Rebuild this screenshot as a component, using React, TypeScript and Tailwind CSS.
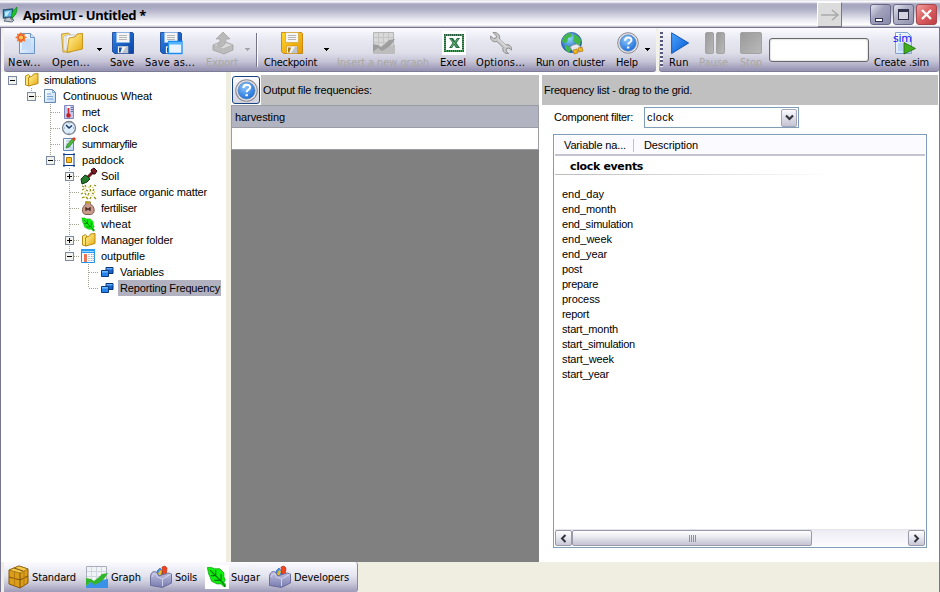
import { useLayoutEffect, useRef, useState } from "react";
import type { ReactNode } from "react";

/* Text set to an exact advance width through its letter spacing. */
function Label({ text, width, className = "" }: { text: string; width: number; className?: string }) {
  const ref = useRef<HTMLSpanElement>(null);
  const [spacing, setSpacing] = useState<number | null>(null);
  useLayoutEffect(() => {
    if (ref.current && spacing === null) {
      setSpacing((width - ref.current.getBoundingClientRect().width) / text.length);
    }
  }, [spacing, text, width]);
  return (
    <span ref={ref} className={`inline-block shrink-0 whitespace-pre ${className}`} style={{ letterSpacing: spacing ?? 0 }}>
      {text}
    </span>
  );
}

const TAHOMA = "font-['DejaVu_Sans_Condensed','DejaVu_Sans',sans-serif] text-[11px]";
const SANS = "font-['Liberation_Sans',Arial,sans-serif] text-[11px]";

function Gradients() {
  return (
    <svg className="absolute h-0 w-0">
      <defs>
        <linearGradient id="blueDisk" x1="0" y1="0" x2="1" y2="1"><stop stopColor="#2f86ea" /><stop offset="1" stopColor="#0a3fa0" /></linearGradient>
        <linearGradient id="goldDisk" x1="0" y1="0" x2="1" y2="1"><stop stopColor="#ffd52a" /><stop offset="1" stopColor="#e59a00" /></linearGradient>
        <linearGradient id="folder" x1="0" y1="0" x2="1" y2="1"><stop stopColor="#fff6a0" /><stop offset="1" stopColor="#e9a90c" /></linearGradient>
        <linearGradient id="page" x1="0" y1="0" x2="1" y2="1"><stop stopColor="#ffffff" /><stop offset="1" stopColor="#b9d6f7" /></linearGradient>
        <linearGradient id="play" x1="0" y1="0" x2="1" y2="1"><stop stopColor="#4aa3ff" /><stop offset="1" stopColor="#0659cf" /></linearGradient>
        <linearGradient id="grey" x1="0" y1="0" x2="1" y2="1"><stop stopColor="#9a9a9a" /><stop offset="1" stopColor="#b9b9b9" /></linearGradient>
        <radialGradient id="ball" cx=".4" cy=".3" r=".7"><stop stopColor="#8cc6ff" /><stop offset="1" stopColor="#1f70d8" /></radialGradient>
        <radialGradient id="globe" cx=".4" cy=".3" r=".7"><stop stopColor="#8fdcff" /><stop offset="1" stopColor="#0b4aa8" /></radialGradient>
        <linearGradient id="box" x1="0" y1="0" x2="0" y2="1"><stop stopColor="#c5c5e4" /><stop offset="1" stopColor="#7679ae" /></linearGradient>
      </defs>
    </svg>
  );
}

function Pic({ w = 22, h = 22, children }: { w?: number; h?: number; children: ReactNode }) {
  return <svg width={w} height={h} viewBox={`0 0 ${w} ${h}`} className="block shrink-0 overflow-visible">{children}</svg>;
}

const NewIcon = () => (
  <Pic>
    <path d="M3.500 1.500h11l4 4v16h-15z" fill="url(#page)" stroke="#6d94c4" />
    <path d="M14.500 1.500v4h4" fill="#dcebfb" stroke="#6d94c4" />
    <path d="M6 7h9v11H6z" fill="#c4dcf7" />
    <path d="M5 0l1.300 2.300L9 1.500l-.5 2.600L11 5.500 8.700 6.800 9.500 9.500 6.600 9 5 11.300 3.500 9 .8 9.500l.7-2.700L-1 5.500l2.500-1.400L.8 1.500l2.700.8z" fill="#f8742a" />
    <circle cx="5" cy="5.500" r="2.600" fill="#ffc55a" stroke="#e33c22" strokeWidth=".8" />
  </Pic>
);
const OpenIcon = () => (
  <Pic>
    <path d="M.500 2l7-1 2 2v17H2z" fill="#f9dc63" stroke="#b98a25" strokeWidth=".8" />
    <path d="M3 4h9v14H3z" fill="#fff" stroke="#b7b7b7" strokeWidth=".6" />
    <path d="M5 3h9v14H5z" fill="#f4f6fa" stroke="#b0b0b0" strokeWidth=".6" />
    <path d="M8 6l6-1 2-3 5.500-.6V17L6 20.500z" fill="url(#folder)" stroke="#c18f14" strokeWidth=".9" />
  </Pic>
);
function Disk({ gold = false, window: win = false }: { gold?: boolean; window?: boolean }) {
  const edge = gold ? "#c07a00" : "#0d3b92";
  return (
    <Pic>
      <path d="M.5.500h20l1 1v20H2.500l-2-2z" fill={gold ? "url(#goldDisk)" : "url(#blueDisk)"} stroke={edge} strokeWidth=".8" />
      <path d="M4.500.500h13v10h-13z" fill="#f5f5f5" stroke={gold ? "#d0a436" : "#8fb6e8"} strokeWidth=".7" />
      <path d="M7 3.500h8M7 5.500h8M7 7.500h8" stroke="#b5b5b5" />
      <path d="M5.500 14h11v7.500h-11z" fill="#f2f2ee" stroke={edge} strokeWidth=".5" />
      <path d="M7 15.500h3l-1.500 5H7z" fill={gold ? "#a87b1d" : "#1451ad"} />
      <path d="M10 21l4-6h2v6z" fill="#bdc3cd" />
      {win && <path d="M8.500 9.500h13.500v12H8.500z" fill="#e8f3ff" stroke="#1c8cf0" strokeWidth="1.300" />}
      {win && <path d="M8.500 10h13.500v2.500H8.500z" fill="#55b4ff" />}
    </Pic>
  );
}
const ExportIcon = () => (
  <Pic>
    <path d="M1 13l10-4 10 4v5l-9 4L1 18z" fill="#bcbcbc" stroke="#a0a0a0" strokeWidth=".8" />
    <path d="M1 13l10 4 10-4-10-3.500z" fill="#dadada" stroke="#a8a8a8" strokeWidth=".6" />
    <path d="M11 0l7 7h-4c0 4-1 6-5 8-3-1-4-2-4-2 3-1 3-3 3-6H4z" fill="#bababa" stroke="#a0a0a0" strokeWidth=".7" />
  </Pic>
);
function ChartIcon({ off = false }: { off?: boolean }) {
  return (
    <Pic>
      <path d="M.5.500h20v21H.5z" fill={off ? "#d8d8d8" : "#f1f3f6"} stroke={off ? "#b5b5b5" : "#a8aebb"} />
      <path d="M1 5.500h19M1 10.500h19M5.500 1v13M10.500 1v13M15.500 1v13" stroke={off ? "#c4c4c4" : "#d1d5dd"} />
      <path d="M0 20l6-5 4 3 5-4 7-1v9H0z" fill={off ? "#bdbdbd" : "#3991e8"} />
      <path d="M0 12l5 1 3 2 5-4 3-3 6-1-4 6-4 3-5 3-4-3-5 4z" fill={off ? "#9e9e9e" : "#32b52b"} />
    </Pic>
  );
}
const ExcelIcon = () => (
  <Pic w={24} h={24}>
    <path d="M0 0h24v24H0z" fill="#fff" />
    <path d="M3 4h18v16H3z" fill="#fff" stroke="#245f3a" strokeWidth="2" />
    <path d="M3 4h18v16H3z" fill="none" stroke="#4f9f60" strokeWidth="2" strokeDasharray="1 1" />
    <path d="M7 7h4l2 3 2-3h3l-3.500 5L18 17h-4l-2-3-2 3H7l3.500-5z" fill="#246e3f" />
    <path d="M8.500 8l7 8M16 8l-7 8" stroke="#82c58e" strokeWidth=".8" />
  </Pic>
);
const WrenchIcon = () => (
  <Pic>
    <path d="M3 .5l3.500 3.500-.5 2-2.500.5L.5 4C0 8 3 10.500 7 9.500l6 6c-1 3.500 1.500 6.500 5.500 6L16 19l.5-2.500 2.500-.5 2.500 2c.5-4-2.500-6-6-5l-6-6C10.500 3 7.500 0 3 .5z" fill="#c9c9c9" stroke="#868686" strokeWidth=".9" />
    <path d="M8.500 7l8 8" stroke="#f2f2f2" />
  </Pic>
);
const GlobeIcon = () => (
  <Pic>
    <circle cx="10.500" cy="10.500" r="10" fill="url(#globe)" stroke="#17529c" strokeWidth=".8" />
    <path d="M3 4l5-3 3 1-1 3-3 1-1 4-3 1-2-2zM12 2l5 2 3 4-1 6-3 1-1-4-3-2 1-3zM4 13l5 2 1 3-2 3-4-4z" fill="#43b747" />
    <path d="M9 15l3-2 4-1 4 3-3 5-5 0z" fill="#e7e7ef" stroke="#8e8e9c" strokeWidth=".7" />
    <path d="M12 18l4-1 1 4-4 1zM17 16l4-1 1 4-4 1z" fill="#f1b61d" stroke="#a26809" strokeWidth=".6" />
  </Pic>
);
function HelpIcon({ size = 22 }: { size?: number }) {
  return (
    <svg width={size} height={size} viewBox="0 0 22 22" className="block shrink-0">
      <circle cx="11" cy="11" r="10.300" fill="#e7e7ea" stroke="#898991" />
      <circle cx="11" cy="11" r="8.200" fill="url(#ball)" stroke="#6687b4" strokeWidth=".7" />
      <path d="M8 8.700c0-4 6.500-4 6.500-.7 0 2.200-3.300 2.300-3.300 4.600" fill="none" stroke="#fff" strokeWidth="2" />
      <path d="M10 14.500h2.300v2H10z" fill="#fff" />
    </svg>
  );
}
const PlayIcon = () => <Pic w={18}><path d="M.6.800L17.600 11 .6 21.500z" fill="url(#play)" stroke="#0b4db0" strokeWidth=".9" /></Pic>;
const PauseIcon = () => <Pic w={20}><rect x=".5" y=".5" width="8" height="21" rx="1.500" fill="url(#grey)" stroke="#a2a2a2" /><rect x="11.500" y=".5" width="8" height="21" rx="1.500" fill="url(#grey)" stroke="#a2a2a2" /></Pic>;
const StopIcon = () => <Pic><rect x=".5" y=".5" width="21" height="21" rx="1.500" fill="url(#grey)" stroke="#a2a2a2" /></Pic>;
const SimIcon = () => (
  <Pic>
    <path d="M1.500.500h12l4 4v17h-16z" fill="url(#page)" stroke="#7fa4cf" />
    <path d="M4 11h8v8H4z" fill="#bcd6f4" />
    <text x="-1" y="10" fontSize="11" textLength="19" className="fill-[#1717ee] font-['DejaVu_Sans',sans-serif]">sim</text>
    <path d="M10 10.500l11.500 6L10 22z" fill="#40ae1c" stroke="#24680f" strokeWidth=".8" />
  </Pic>
);
const Crate = () => (
  <Pic>
    <path d="M1 4l10-4 9 3v14l-8 5-11-4z" fill="#dc9d18" stroke="#84570b" />
    <path d="M1 4l11 3 8-4-9-3z" fill="#f4cb4e" stroke="#8e610f" strokeWidth=".7" />
    <path d="M12 7v15M1 11l11 3 8-4M6 2l9 3" fill="none" stroke="#80560c" strokeWidth="1.100" />
    <path d="M6.500 6v14M16 5v14" stroke="#b67c10" />
  </Pic>
);
const Toolbox = () => (
  <Pic>
    <path d="M7 5l3-3 3 4v6H7z" fill="#4090e5" stroke="#1b5dac" strokeWidth=".6" />
    <path d="M12 1l3-1 2 2-1 9h-3z" fill="#f1441d" stroke="#a52612" strokeWidth=".6" />
    <path d="M8 8l2-4 2 1-2 6z" fill="#efb923" />
    <path d="M.500 11c0-7 7-7 8-1l10-3 3 1v9l-9 4.500-12-2z" fill="url(#box)" stroke="#656895" strokeWidth=".9" />
    <path d="M2 11c1-4 5-4 5.500 0l5 2v7M12.500 13l8.500-5" fill="none" stroke="#d9d9f0" strokeWidth=".9" />
  </Pic>
);
function Leaf({ size = 16 }: { size?: number }) {
  return (
    <svg width={size} height={size} viewBox="0 0 16 16" className="block shrink-0">
      <path d="M1 1h3l2 1h4l3 3v3l1 2-1 2 1 1v2h-1l-2-2H8L4 11 3 8 2 6z" fill="#0cf00c" stroke="#12a812" strokeWidth=".6" />
      <path d="M3 3l9 9 2 3M7 3v4M11 6v4M3.500 7H7M6 10.500h4" fill="none" stroke="#087a0c" strokeWidth=".9" />
    </svg>
  );
}

type Tool = { label: string; w: number; gap: string; icon: ReactNode; shift: string; off?: boolean };
const leftTools: (Tool | "arrow" | "arrowOff" | "sep")[] = [
  { label: "New...", w: 33, gap: "ml-[4px]", icon: <NewIcon />, shift: "pl-[8px]" },
  { label: "Open...", w: 38, gap: "ml-[11px]", icon: <OpenIcon />, shift: "pl-[9px]" },
  "arrow",
  { label: "Save", w: 24, gap: "ml-[8px]", icon: <Disk />, shift: "pl-[2px]" },
  { label: "Save as...", w: 50, gap: "ml-[11px]", icon: <Disk window />, shift: "pl-[15px]" },
  { label: "Export", w: 32, gap: "ml-[11px]", icon: <ExportIcon />, shift: "pl-[6px]", off: true },
  "arrowOff",
  "sep",
  { label: "Checkpoint", w: 53, gap: "ml-[6px]", icon: <Disk gold />, shift: "pl-[17px]" },
  "arrow",
  { label: "Insert a new graph", w: 92, gap: "ml-[8px]", icon: <ChartIcon off />, shift: "pl-[36px]", off: true },
  { label: "Excel", w: 26, gap: "ml-[11px]", icon: <div className="flex h-[22px] items-center"><ExcelIcon /></div>, shift: "pl-[2px]" },
  { label: "Options...", w: 49, gap: "ml-[10px]", icon: <WrenchIcon />, shift: "pl-[14px]" },
  { label: "Run on cluster", w: 69, gap: "ml-[11px]", icon: <GlobeIcon />, shift: "pl-[25px]" },
  { label: "Help", w: 22, gap: "ml-[11px]", icon: <HelpIcon />, shift: "pl-[1px]" },
  "arrow",
];
const rightTools: Tool[] = [
  { label: "Run", w: 20, gap: "ml-[6px]", icon: <PlayIcon />, shift: "pl-[2px]" },
  { label: "Pause", w: 29, gap: "ml-[10px]", icon: <PauseIcon />, shift: "pl-[6px]", off: true },
  { label: "Stop", w: 22, gap: "ml-[12px]", icon: <StopIcon />, shift: "pl-0", off: true },
];

function ToolButton({ t }: { t: Tool }) {
  return (
    <div className={`shrink-0 ${t.gap}`} style={{ width: t.w }}>
      <div className={`mt-[4px] h-[22px] ${t.shift}`}>{t.icon}</div>
      <div className={`mt-[2px] h-[14px] leading-[14px] ${TAHOMA} ${t.off ? "text-[#aaa89f]" : "text-black"}`}>
        <Label text={t.label} width={t.w} />
      </div>
    </div>
  );
}

function DropArrow({ off = false }: { off?: boolean }) {
  return (
    <svg width="5" height="3" viewBox="0 0 5 3" shapeRendering="crispEdges" className="mt-[20px] ml-[7px] block shrink-0">
      <path d="M0 0h5v1H4v1H3v1H2V2H1V1H0z" fill={off ? "#a3a3a9" : "#000"} />
    </svg>
  );
}

const STRIP = "bg-[linear-gradient(#fafaff_0%,#e7e7f1_30%,#dedee9_58%,#c5c3d6_78%,#9995b5_97%)] border-b border-[#7c7c94]";

const FolderSmall = () => (
  <Pic w={16} h={16}>
    <path d="M1.500 4l3-1.500 1 1v10.500l-4-1z" fill="#fbe774" stroke="#b98917" />
    <path d="M4.500 5.500L8.500 4l1-2 4.500-.5v10L4.500 14z" fill="url(#folder)" stroke="#bd8c10" />
  </Pic>
);
const PageSmall = () => (
  <Pic w={16} h={16}><path d="M1.500 1.500h8l3 3v10h-11z" fill="url(#page)" stroke="#6688ae" /><path d="M9.500 1.500v3h3M4 6h4M4 8.500h6M4 11h6" fill="none" stroke="#7ba4d1" /></Pic>
);
const MetSmall = () => (
  <Pic w={16} h={16}><path d="M2.500 1.500h9v13h-9z" fill="#c2c7ed" stroke="#8288be" /><path d="M9 3.500h2M9 5.500h2M9 7.500h2" stroke="#666b9c" /><path d="M6.500 2v9" stroke="#fff" strokeWidth="3" /><path d="M6.500 4v8" stroke="#d22525" strokeWidth="2" /><circle cx="6.500" cy="11.500" r="2.200" fill="#c51e22" /></Pic>
);
const ClockSmall = () => (
  <Pic w={16} h={16}><circle cx="7" cy="8" r="6.500" fill="#deedfc" stroke="#777f8b" strokeWidth="1.300" /><path d="M4 5l3 3 3-2.500" fill="none" stroke="#173b68" strokeWidth="1.500" /><path d="M7 2.500v1M7 12.500v1M2 8h1M11 8h1" stroke="#758ba5" /></Pic>
);
const SummarySmall = () => (
  <Pic w={16} h={16}><path d="M1.500 2.500h10v12h-10z" fill="url(#page)" stroke="#6688ae" /><path d="M4 5h5M4 8h4M4 11h5" stroke="#a5b6ca" /><path d="M4 12l1-3 6-7 2 2-6 7z" fill="#4dbb34" stroke="#277b22" strokeWidth=".7" /><path d="M10 3l2-2 2 2-2 2z" fill="#ed3930" /></Pic>
);
const PaddockSmall = () => (
  <Pic w={16} h={16}><path d="M2 1v14M12 1v14M1 2.500h12M1 13.500h12" stroke="#0b3d96" /><path d="M4.500 5.500h5v5h-5z" fill="#ffc51c" stroke="#ad7507" /></Pic>
);
const SoilSmall = () => (
  <Pic w={16} h={16}><path d="M6 10l6-6" stroke="#711c22" strokeWidth="3" /><path d="M10 2l3-2 3 3-2 3-2 0z" fill="#7e1d27" stroke="#320509" /><path d="M0 11l4-4 2 1 3 3-3 3-5 2z" fill="#267b2c" stroke="#0b3612" /></Pic>
);
const OrganicSmall = () => (
  <Pic w={16} h={16}>
    <g fill="none" stroke="#8f8d19" strokeWidth="1.300">
      <path d="M1 2l2 1M4 1l1 2M10 1l-1 2M13 1l2 1M1 6l2-1M5 6l2 1M9 5l1 2M13 5l-1 2M0 10l2-1M4 9l1 2M8 9l-1 2M11 9l2 1M1 14l2-1M5 13l2 2M10 13l-1 2M13 13l2 2" />
    </g>
    <g fill="none" stroke="#ddd552" strokeWidth="1"><path d="M3 4l2 1M7 3l2 1M11 4l2-1M3 8l2-1M8 7l2 1M13 9l1-2M6 12l2-1M10 11l2 1M3 12l1 2" /></g>
  </Pic>
);
const FertSmall = () => (
  <Pic w={16} h={16}><path d="M4.500 2h5l-.5 2c5 2 6 10 .5 10.500H5C-.5 14 1 6 5 4z" fill="#c99a8b" stroke="#805b4b" /><path d="M4.500 2l5 1" stroke="#b99b25" strokeWidth="2" /><path d="M5 11V8l2 1.500L9 8v3" fill="none" stroke="#391e17" strokeWidth="1.200" /></Pic>
);
const OutputSmall = () => (
  <Pic w={16} h={16}><path d="M.500 1.500h13v13H.500z" fill="#fff" stroke="#2292ed" /><path d="M0 1h14v4H0z" fill="#279cf7" /><path d="M1 3.500h12" stroke="#9ad4ff" /><path d="M3 6h3v8H3z" fill="#ef7654" /><path d="M8 6v8M10.500 6v8M12.500 6v8" stroke="#acb4c0" strokeDasharray="1 1" strokeWidth="1.500" /></Pic>
);
const VarSmall = () => (
  <Pic w={16} h={16}><path d="M6 3.500h7v6H6z" fill="#1762cb" stroke="#09316d" /><path d="M6.500 4h6v1.500h-6z" fill="#61a9ff" /><path d="M1.500 6.500h7v6h-7z" fill="#2783eb" stroke="#093b82" /><path d="M2 7h6v1.500H2z" fill="#70bbff" /></Pic>
);

type Node = { label: string; level: number; w: number; icon: ReactNode; box?: "+" | "-"; last?: boolean; selected?: boolean };
const nodes: Node[] = [
  { label: "simulations", level: 0, w: 52, icon: <FolderSmall />, box: "-" },
  { label: "Continuous Wheat", level: 1, w: 89, icon: <PageSmall />, box: "-", last: true },
  { label: "met", level: 2, w: 18, icon: <MetSmall /> },
  { label: "clock", level: 2, w: 27, icon: <ClockSmall /> },
  { label: "summaryfile", level: 2, w: 55, icon: <SummarySmall /> },
  { label: "paddock", level: 2, w: 42, icon: <PaddockSmall />, box: "-", last: true },
  { label: "Soil", level: 3, w: 18, icon: <SoilSmall />, box: "+" },
  { label: "surface organic matter", level: 3, w: 106, icon: <OrganicSmall /> },
  { label: "fertiliser", level: 3, w: 36, icon: <FertSmall /> },
  { label: "wheat", level: 3, w: 30, icon: <Leaf size={15} /> },
  { label: "Manager folder", level: 3, w: 72, icon: <FolderSmall />, box: "+" },
  { label: "outputfile", level: 3, w: 44, icon: <OutputSmall />, box: "-", last: true },
  { label: "Variables", level: 4, w: 44, icon: <VarSmall /> },
  { label: "Reporting Frequency", level: 4, w: 100, icon: <VarSmall />, last: true, selected: true },
];

function Branch({ n }: { n: Node }) {
  return (
    <svg width="21" height="16" viewBox="0 0 21 16" shapeRendering="crispEdges" className="block shrink-0">
      {n.level > 0 && <path d={`M9.500 0V${n.last ? 8 : 16}M10 8.500H20`} stroke="#a5a394" strokeDasharray="1 1" fill="none" />}
      {n.box && (
        <>
          <rect x="5.500" y="4.500" width="8" height="8" rx="1" fill="#f1f1ed" stroke="#7b8ca0" />
          <path d={n.box === "+" ? "M7 8.500h5M9.500 6v5" : "M7 8.500h5"} stroke="#000" />
        </>
      )}
    </svg>
  );
}

function Tree() {
  return (
    <div className={`h-[490px] w-[225px] shrink-0 bg-white ${SANS}`}>
      {nodes.map((n) => (
        <div key={n.label} className="flex h-[16px] items-center" style={{ paddingLeft: 2 + n.level * 19 }}>
          <Branch n={n} />
          <div className="w-[18px] shrink-0">{n.icon}</div>
          <div className={`flex h-[16px] items-center pl-[2px] leading-[15px] ${n.selected ? "bg-[#b1b1bf] pr-[1px]" : ""}`}>
            <Label text={n.label} width={n.w} />
          </div>
        </div>
      ))}
    </div>
  );
}

const events: [string, number][] = [
  ["end_day", 42], ["end_month", 54], ["end_simulation", 71], ["end_week", 50], ["end_year", 45], ["post", 20], ["prepare", 36],
  ["process", 38], ["report", 27], ["start_month", 56], ["start_simulation", 73], ["start_week", 52], ["start_year", 47],
];

function ScrollButton({ dir }: { dir: "left" | "right" }) {
  return (
    <div className="flex h-[16px] w-[17px] shrink-0 items-center justify-center rounded-[2px] border border-[#9999aa] bg-[linear-gradient(#fff,#e7e7f0_50%,#c7c7d6)]">
      <svg width="7" height="9" viewBox="0 0 7 9"><path d={dir === "left" ? "M5.500 1L2 4.500 5.500 8" : "M1.500 1L5 4.500 1.500 8"} fill="none" stroke="#33333d" strokeWidth="2" /></svg>
    </div>
  );
}

function TitleBar() {
  return (
    <div className="flex h-[28px] border-b border-[#77758f] bg-[linear-gradient(#cfcfdd_0px,#fff_1px,#f3f3f8_2px,#a5a5bf_4px,#aaaac3_8px,#c3c3d5_13px,#e0e0ea_18px,#fbfbfd_24px,#fff_25px,#b6b6ca_27px)]">
      <svg width="16" height="16" viewBox="0 0 16 16" className="mt-[7px] ml-[2px] block">
        <path d="M1.500 3l9-1v8l-9 1z" fill="#65b8e6" stroke="#23536f" strokeWidth="1.400" />
        <path d="M3 5l5-1-3 5H3z" fill="#c2eaff" />
        <path d="M4 11l4-1 1 2 3 1-2 2-8-1z" fill="#bdc5ce" stroke="#41505a" strokeWidth=".8" />
        <path d="M10 12c-1-6 1-9 5-12 0 5-1 8-4 10z" fill="#1bc52b" stroke="#0a741a" strokeWidth=".6" />
      </svg>
      <div className="mt-[6px] ml-[5px] w-[123px] font-['Noto_Sans',sans-serif] text-[13px] leading-[18px] font-bold text-black"><Label text="ApsimUI - Untitled *" width={123} /></div>
      <div className="mt-[2px] ml-[671px] flex h-[25px] w-[25px] shrink-0 items-center justify-center border border-t-white border-r-[#77777f] border-b-[#77777f] border-l-white bg-[#dcdcdc]">
        <svg width="20" height="12" viewBox="0 0 20 12"><path d="M1 6h17M12 1l6 5-6 5" fill="none" stroke="#aaa" strokeWidth="1.500" /></svg>
      </div>
      <div className="mt-[4px] ml-[28px] flex gap-[2px]">
        <div className="h-[21px] w-[21px] rounded-[3px] border border-[#666688] bg-[linear-gradient(135deg,#e4e4ef,#a2a2bd_40%,#8888a8)]"><div className="mt-[13px] ml-[4px] h-[4px] w-[8px] border border-[#333355] bg-white" /></div>
        <div className="h-[21px] w-[21px] rounded-[3px] border border-[#666688] bg-[linear-gradient(135deg,#e4e4ef,#b1b1c7_40%,#9292ae)]"><div className="mt-[4px] ml-[4px] h-[11px] w-[11px] border border-t-[3px] border-[#30304a] bg-[#d4d4e1]" /></div>
        <div className="flex h-[21px] w-[21px] items-center justify-center rounded-[3px] border border-[#a5474d] bg-[linear-gradient(135deg,#f0a1a1,#dc6263_45%,#bd3d43)]">
          <svg width="13" height="13" viewBox="0 0 13 13"><path d="M2 2l9 9M11 2l-9 9" stroke="#fff" strokeWidth="2.300" /></svg>
        </div>
      </div>
    </div>
  );
}

function Toolbars() {
  return (
    <div className="flex h-[44px] bg-[#f3f2ea] pl-[3px]">
      <div className={`flex w-[652px] shrink-0 rounded-b-[3px] ${STRIP}`}>
        {leftTools.map((t, i) =>
          t === "arrow" || t === "arrowOff" ? <DropArrow key={i} off={t === "arrowOff"} /> :
          t === "sep" ? <div key={i} className="mt-[5px] ml-[6px] h-[34px] w-[2px] shrink-0 border-r border-white bg-[#73718c]" /> :
          <ToolButton key={i} t={t} />
        )}
      </div>
      <div className={`ml-[3px] flex w-[280px] shrink-0 rounded-b-[3px] ${STRIP}`}>
        <div className="mt-[4px] ml-[1px] h-[35px] w-[3px] shrink-0 bg-[repeating-linear-gradient(#58587b_0px,#58587b_2px,#eeeef5_2px,#eeeef5_4px)]" />
        {rightTools.map((t) => <ToolButton key={t.label} t={t} />)}
        <div className="mt-[10px] ml-[7px] h-[24px] w-[100px] shrink-0 rounded-[3px] border border-[#686868] bg-white shadow-[inset_0_0_2px_#aaa]" />
        <ToolButton t={{ label: "Create .sim", w: 55, gap: "ml-[5px]", icon: <SimIcon />, shift: "pl-[20px]" }} />
      </div>
    </div>
  );
}

function FrequencyGrid() {
  return (
    <div className={`mt-[3px] flex h-[487px] w-[308px] shrink-0 flex-col bg-[#808080] ${SANS}`}>
      <div className="flex h-[30px] items-center bg-[#c0c0c0]">
        <div className="flex h-[30px] w-[30px] shrink-0 items-center justify-center border border-white bg-white">
          <div className="flex h-[28px] w-[28px] items-center justify-center rounded-[3px] border border-[#17447f] bg-[linear-gradient(#fcfcff,#d2d1df)]"><HelpIcon size={23} /></div>
        </div>
        <div className="ml-[2px]"><Label text="Output file frequencies:" width={109} /></div>
      </div>
      <div className="flex h-[23px] items-center border border-[#9c9ca4] bg-[#b1b3c0] pt-px pl-[3px]"><Label text="harvesting" width={50} /></div>
      <div className="h-[22px] border border-t-0 border-[#9c9ca4] bg-white" />
    </div>
  );
}

function FrequencyList() {
  return (
    <div className={`mt-[3px] ml-[3px] flex w-[396px] flex-col ${SANS}`}>
      <div className="flex h-[30px] shrink-0 items-center bg-[#c0c0c0] pl-[2px]"><Label text="Frequency list - drag to the grid." width={148} /></div>
      <div className="mt-[2px] ml-[12px] flex h-[21px] items-center">
        <Label text="Component filter:" width={79} />
        <div className="ml-[11px] flex h-[21px] w-[155px] items-center justify-between border border-[#7f9db9] bg-white pl-[2px]">
          <Label text="clock" width={27} />
          <div className="mr-px flex h-[18px] w-[16px] items-center justify-center rounded-[2px] border border-[#a5a5b7] bg-[linear-gradient(#fafaff,#dedee8_50%,#c3c3d3)]">
            <svg width="9" height="7" viewBox="0 0 9 7"><path d="M1 1.500L4.500 5 8 1.500" fill="none" stroke="#34343e" strokeWidth="2.200" /></svg>
          </div>
        </div>
      </div>
      <div className="mt-[6px] ml-[11px] flex h-[414px] w-[374px] flex-col border border-[#7f9db9] bg-white p-px">
        <div className="flex h-[20px] shrink-0 items-center border-b-2 border-[#c4c3d2] bg-[#fafaff] pt-px pl-[9px]">
          <Label text="Variable na..." width={62} />
          <div className="mr-[10px] ml-[7px] h-[13px] w-px bg-[#c1bfd0]" />
          <Label text="Description" width={54} />
        </div>
        <div className="mt-[3px] h-[15px] shrink-0 pl-[15px] font-['DejaVu_Sans',sans-serif] text-[11px] leading-[15px] font-bold"><Label text="clock events" width={73} /></div>
        <div className="h-px shrink-0 bg-[linear-gradient(90deg,#bbb,#fff_75%)]" />
        <div className="mt-[12px] pl-[7px]">
          {events.map(([name, w]) => <div key={name} className="h-[15px] leading-[15px]"><Label text={name} width={w} /></div>)}
        </div>
        <div className="mt-auto flex h-[17px] shrink-0 border-t border-[#e4e4eb] bg-[linear-gradient(#ececf3,#fbfbff)]">
          <ScrollButton dir="left" />
          <div className="flex h-[16px] w-[240px] items-center justify-center gap-[1px] rounded-[2px] border border-[#9999aa] bg-[linear-gradient(#fff,#ededf3_35%,#c3c3d3)]">
            {[0, 1, 2, 3].map((i) => <div key={i} className="h-[7px] w-px bg-[#8f8fa2]" />)}
          </div>
          <div className="ml-auto"><ScrollButton dir="right" /></div>
        </div>
      </div>
    </div>
  );
}

function BottomTabs() {
  const tabs = [
    { label: "Standard", w: 44, gap: "ml-[4px]", pad: "w-[24px]", icon: <Crate /> },
    { label: "Graph", w: 30, gap: "ml-[10px]", pad: "w-[25px]", icon: <ChartIcon /> },
    { label: "Soils", w: 22, gap: "ml-[9px]", pad: "w-[25px]", icon: <Toolbox /> },
    { label: "Sugar", w: 29, gap: "ml-[8px]", pad: "w-[26px]", icon: <div className="flex h-[24px] w-[24px] items-center justify-center bg-white"><Leaf size={22} /></div> },
    { label: "Developers", w: 55, gap: "ml-[9px]", pad: "w-[25px]", icon: <Toolbox /> },
  ];
  return (
    <div className="h-[30px] bg-[#efeee1] pl-[3px]">
      <div className="flex h-[30px] w-[354px] items-center rounded-r-[3px] border-r border-[#8a88a0] bg-[linear-gradient(#fafaff_0%,#e5e5ef_45%,#c8c7d9_72%,#9e9bb9_100%)]">
        {tabs.map((t) => (
          <div key={t.label} className={`flex items-center ${t.gap}`}>
            <div className={`shrink-0 ${t.pad}`}>{t.icon}</div>
            <div className="flex pt-[2px]"><Label text={t.label} width={t.w} className={TAHOMA} /></div>
          </div>
        ))}
      </div>
    </div>
  );
}

export default function App() {
  return (
    <div className="h-[592px] w-[940px] overflow-hidden bg-white text-black">
      <Gradients />
      <TitleBar />
      <div className="h-[564px] border-r border-l border-[#77758f]">
        <Toolbars />
        <div className="flex h-[490px] bg-white">
          <Tree />
          <div className="h-[490px] w-[5px] shrink-0 bg-[#efeee1]" />
          <FrequencyGrid />
          <FrequencyList />
        </div>
        <BottomTabs />
      </div>
    </div>
  );
}
